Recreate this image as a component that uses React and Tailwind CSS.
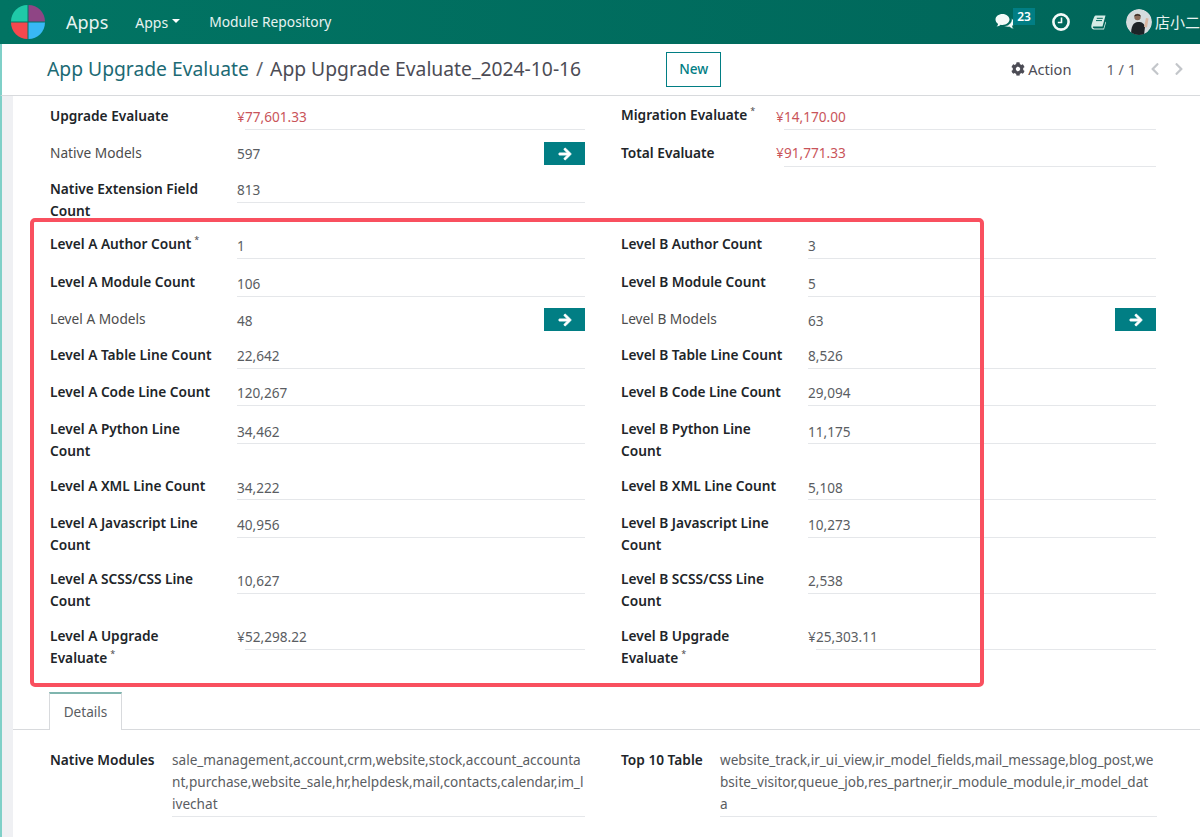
import React from "react";
import { FaArrowRight, FaChevronLeft, FaChevronRight, FaCog } from "react-icons/fa";

const Star = () => <span className="inline-block align-top ml-[3px] text-[9px] leading-[14px] font-normal text-[#4c4c4c]">*</span>;

function Field({ label, value, star, strong = true, button, red, labelW = "w-[187px] pr-[20px]", valueBox = "mt-[1px] h-[24px]", noline, yen }) {
  const color = red ? "text-[#c9545a]" : "text-[#5a5d62]";
  return (
    <div className="flex items-start">
      <div className={`${labelW} shrink-0 text-[13.700px] leading-[22px] ${strong ? "font-semibold text-[#212529]" : "text-[#4c4c4c]"}`}>
        {label}{star && <Star />}
      </div>
      <div className="flex-1 min-w-0 flex items-start">
        <div className={`flex-1 flex ${valueBox} leading-[22px] ${color}`}>
          {yen && <span className="w-[8px] shrink-0">¥</span>}
          <span className={`flex-1 ${noline ? "" : "border-b border-[#e5e7ea]"}`}>{value}</span>
        </div>
        {button && <Arrow />}
      </div>
    </div>
  );
}

function Arrow() {
  return (
    <div className="w-[41px] h-[23px] bg-[#017e84] flex items-center justify-center text-white">
      <FaArrowRight size={14} stroke="currentColor" strokeWidth={30} />
    </div>
  );
}

const rows = [
  ["h-[38px]", "Author Count", "1", "3", "mt-[2px] h-[24px]", true],
  ["h-[37px]", "Module Count", "106", "5", "mt-[2px] h-[24px]"],
  ["h-[36px]", "Models", "48", "63", "mt-[2px] h-[24px]", false, true],
  ["h-[37px]", "Table Line Count", "22,642", "8,526", "mt-[1px] h-[24px]"],
  ["h-[37px]", "Code Line Count", "120,267", "29,094", "mt-[1px] h-[24px]"],
  ["h-[57px]", "Python Line Count", "34,462", "11,175", "mt-[3px] h-[23px]"],
  ["h-[37px]", "XML Line Count", "34,222", "5,108", "mt-[2px] h-[23px]"],
  ["h-[56px]", "Javascript Line Count", "40,956", "10,273", "mt-[2px] h-[24px]"],
  ["h-[57px]", "SCSS/CSS Line Count", "10,627", "2,538", "mt-[2px] h-[24px]"],
  ["h-[60px]", "Upgrade Evaluate", "52,298.22", "25,303.11", "mt-[1px] h-[24px]", false, false, true],
];

function Logo() {
  return (
    <svg width="34" height="34" viewBox="0 0 34 34">
      <path d="M16.5 0v16.5H0C0 7.4 7.4 0 16.5 0z" fill="#1fc9a8" />
      <path d="M17.5 0C26.6 0 34 7.4 34 16.5H17.5z" fill="#8f4585" />
      <path d="M0 17.5h16.5V34C7.4 34 0 26.6 0 17.5z" fill="#f5484e" />
      <path d="M17.5 17.5H34C34 26.6 26.6 34 17.5 34z" fill="#38b8f5" />
    </svg>
  );
}

function Chat() {
  return (
    <svg width="20" height="18" viewBox="0 0 20 18">
      <path d="M7.5 1C3.6 1 .5 3.4.5 6.6c0 1.8 1 3.300 2.600 4.400-.2 1-.8 1.900-1.500 2.600 1.600-.1 3-.8 4-1.800.6.100 1.300.200 1.900.200 3.900 0 7-2.400 7-5.400S11.400 1 7.500 1z" fill="#f4fbf9" />
      <path d="M16.500 5.500c1.800.9 3 2.300 3 3.900 0 1.400-.8 2.600-2.100 3.500.1.900.6 2.100 1.500 3.100-1.800-.2-3.300-1-4.300-2-.6.1-1.100.1-1.700.1-1.500 0-2.900-.4-4-1 3.900-.1 8.200-2.700 7.600-7.600z" fill="#f4fbf9" stroke="#00695c" strokeWidth="0.6" />
    </svg>
  );
}

function Clock() {
  return (
    <svg width="18" height="18" viewBox="0 0 18 18">
      <circle cx="9" cy="9" r="7.600" fill="none" stroke="#f4fbf9" strokeWidth="2.600" />
      <path d="M9.500 4.500v5H5.800" fill="none" stroke="#f4fbf9" strokeWidth="1.600" />
    </svg>
  );
}

function Book() {
  return (
    <svg width="15" height="15" viewBox="0 0 15 15">
      <path d="M4.500 .5H14.500L11.500 11.500H2.800C2 11.500 1.700 12.100 1.900 12.600 2.100 13.100 2.600 13.400 3.200 13.400H12.500L14.500 6.500 15 7.500 13 14.500H3C1.600 14.500.5 13.500.3 12 .2 11 .7 9 1.500 6.500 2.500 3.500 3.400 .5 4.500 .5z" fill="#d6ece6" />
      <path d="M5.800 3.300h6M5 5.600h6" stroke="#00695c" strokeWidth="1" />
    </svg>
  );
}

function Avatar() {
  return (
    <svg width="26" height="26" viewBox="0 0 26 26" className="rounded-full">
      <circle cx="13" cy="13" r="13" fill="#d5dcde" />
      <path d="M5 26c0-8 2-13 7-13s6 2 7 5l-1 8z" fill="#1d2327" />
      <circle cx="11.500" cy="8" r="3.200" fill="#8a6a58" />
      <path d="M8.300 7.500c0-3 6.400-3 6.400 0-2-1.200-4.400-1.200-6.400 0z" fill="#2a211d" />
      <path d="M18 18l2-9 2.500.5-1.500 9z" fill="#d9b5a0" />
    </svg>
  );
}

export default function App() {
  return (
    <div className="w-[1200px] h-[837px] overflow-hidden relative bg-white text-[13.600px] font-['Noto_Sans','Open_Sans',sans-serif] text-[#4c4c4c]">
      <header className="h-[44px] bg-linear-to-r from-[#017463] to-[#00665a] flex items-center text-[#e8f3f1]">
        <div className="ml-[11px] mr-[21px]"><Logo /></div>
        <span className="text-[18px] mr-[27px]">Apps</span>
        <span className="text-[14px] flex items-center mr-[29px]">Apps<span className="ml-[4px] mt-[-3px] w-0 h-0 border-x-[4px] border-x-transparent border-t-[4px] border-t-white" /></span>
        <span className="text-[13.800px]">Module Repository</span>
        <div className="ml-auto flex items-center">
          <Chat />
          <span className="bg-[#017e84] text-white text-[12px] leading-[17px] w-[22px] text-center font-semibold h-[17px] mb-[11px] -ml-[2px] mr-[17px]">23</span>
          <Clock />
          <span className="ml-[21px] mr-[20px]"><Book /></span>
          <Avatar />
          <span className="ml-[3px] w-[45px] text-[15px] whitespace-nowrap font-['Noto_Sans_CJK_SC',sans-serif] overflow-hidden">店小二</span>
        </div>
      </header>

      <div className="h-[52px] border-b border-[#d8dadd] border-l-2 border-l-[#7fd0c8] flex items-center">
        <div className="ml-[45px] text-[19.300px] whitespace-nowrap">
          <span className="text-[#1c6a74]">App Upgrade Evaluate</span>
          <span className="text-[#5f636b] mx-[7px]">/</span>
          <span className="text-[#4c4c55]">App Upgrade Evaluate_2024-10-16</span>
        </div>
        <div className="ml-[85px] w-[55px] h-[35px] border border-[#017e84] text-[#017e84] flex items-center justify-center font-medium">New</div>
        <div className="ml-auto flex items-center text-[#4c4c55]">
          <FaCog size={14} className="mr-[3px]" />
          <span className="text-[14.600px]">Action</span>
          <span className="ml-[35px] text-[#5f636b] text-[14.500px]">1 / 1</span>
          <FaChevronLeft size={14} className="ml-[12px] text-[#c3c6ca]" />
          <FaChevronRight size={14} className="ml-[10px] mr-[14px] text-[#c3c6ca]" />
        </div>
      </div>

      <main className="flex h-[741px]">
        <div className="w-[13px] shrink-0 bg-[#eff0f3] border-l-2 border-l-[#7fd0c8]" />
        <div className="flex-1 bg-white">
          <div className="pl-[37px] pr-[31px] pt-[9px]">
            <div className="grid grid-cols-[535px_535px] gap-x-[36px]">
              <div className="h-[37px]"><Field label="Upgrade Evaluate" value="77,601.33" yen red /></div>
              <div className="h-[37px]"><Field label="Migration Evaluate" star value="14,170.00" yen red labelW="w-[155px] whitespace-nowrap -mt-[1px]" /></div>
              <div className="h-[36px]"><Field label="Native Models" value="597" strong={false} button noline /></div>
              <div className="h-[36px]"><Field label="Total Evaluate" value="91,771.33" yen red labelW="w-[155px]" valueBox="h-[25px]" /></div>
              <div className="h-[55px]"><Field label="Native Extension Field Count" value="813" /></div>
              <div className="h-[55px]" />
            </div>
            <div className="grid grid-cols-[535px_535px] gap-x-[36px]">
              {rows.map(([h, name, a, b, box, star, btn, st]) => (
                <React.Fragment key={name}>
                  <div className={h}><Field label={`Level A ${name}`} value={a} yen={st} star={star || st} strong={!btn} button={btn} noline={btn} valueBox={box} /></div>
                  <div className={h}><Field label={`Level B ${name}`} value={b} yen={st} star={st} strong={!btn} button={btn} noline={btn} valueBox={box} /></div>
                </React.Fragment>
              ))}
            </div>
          </div>

          <div className="h-[38px] border-b border-[#d8dadd] mt-[7px] pl-[36px]">
            <div className="w-[73px] h-[38px] bg-white border-x border-[#d8dadd] border-t-2 border-t-[#7fb5ae] flex items-center justify-center text-[#5a5d62]">Details</div>
          </div>

          <div className="pl-[37px] pr-[31px] pt-[19px] grid grid-cols-[535px_536px] gap-x-[36px]">
            <div className="flex items-start">
              <div className="w-[122px] shrink-0 font-semibold text-[13.700px] text-[#212529] leading-[22px]">Native Modules</div>
              <div className="flex-1 break-all leading-[22px] text-[#5a5d62] border-b border-[#e5e7ea] pb-[1px]">sale_management,account,crm,website,stock,account_accountant,purchase,website_sale,hr,helpdesk,mail,contacts,calendar,im_livechat</div>
            </div>
            <div className="flex items-start">
              <div className="w-[99px] shrink-0 font-semibold text-[13.700px] text-[#212529] leading-[22px]">Top 10 Table</div>
              <div className="flex-1 break-all leading-[22px] text-[#5a5d62] border-b border-[#e5e7ea] pb-[1px] pr-[2px]">website_track,ir_ui_view,ir_model_fields,mail_message,blog_post,website_visitor,queue_job,res_partner,ir_module_module,ir_model_data</div>
            </div>
          </div>
        </div>
      </main>

      <div className="absolute left-[30px] top-[218px] w-[954px] h-[469px] border-[4px] border-[#f9505f] rounded-[5px] pointer-events-none" />
    </div>
  );
}
